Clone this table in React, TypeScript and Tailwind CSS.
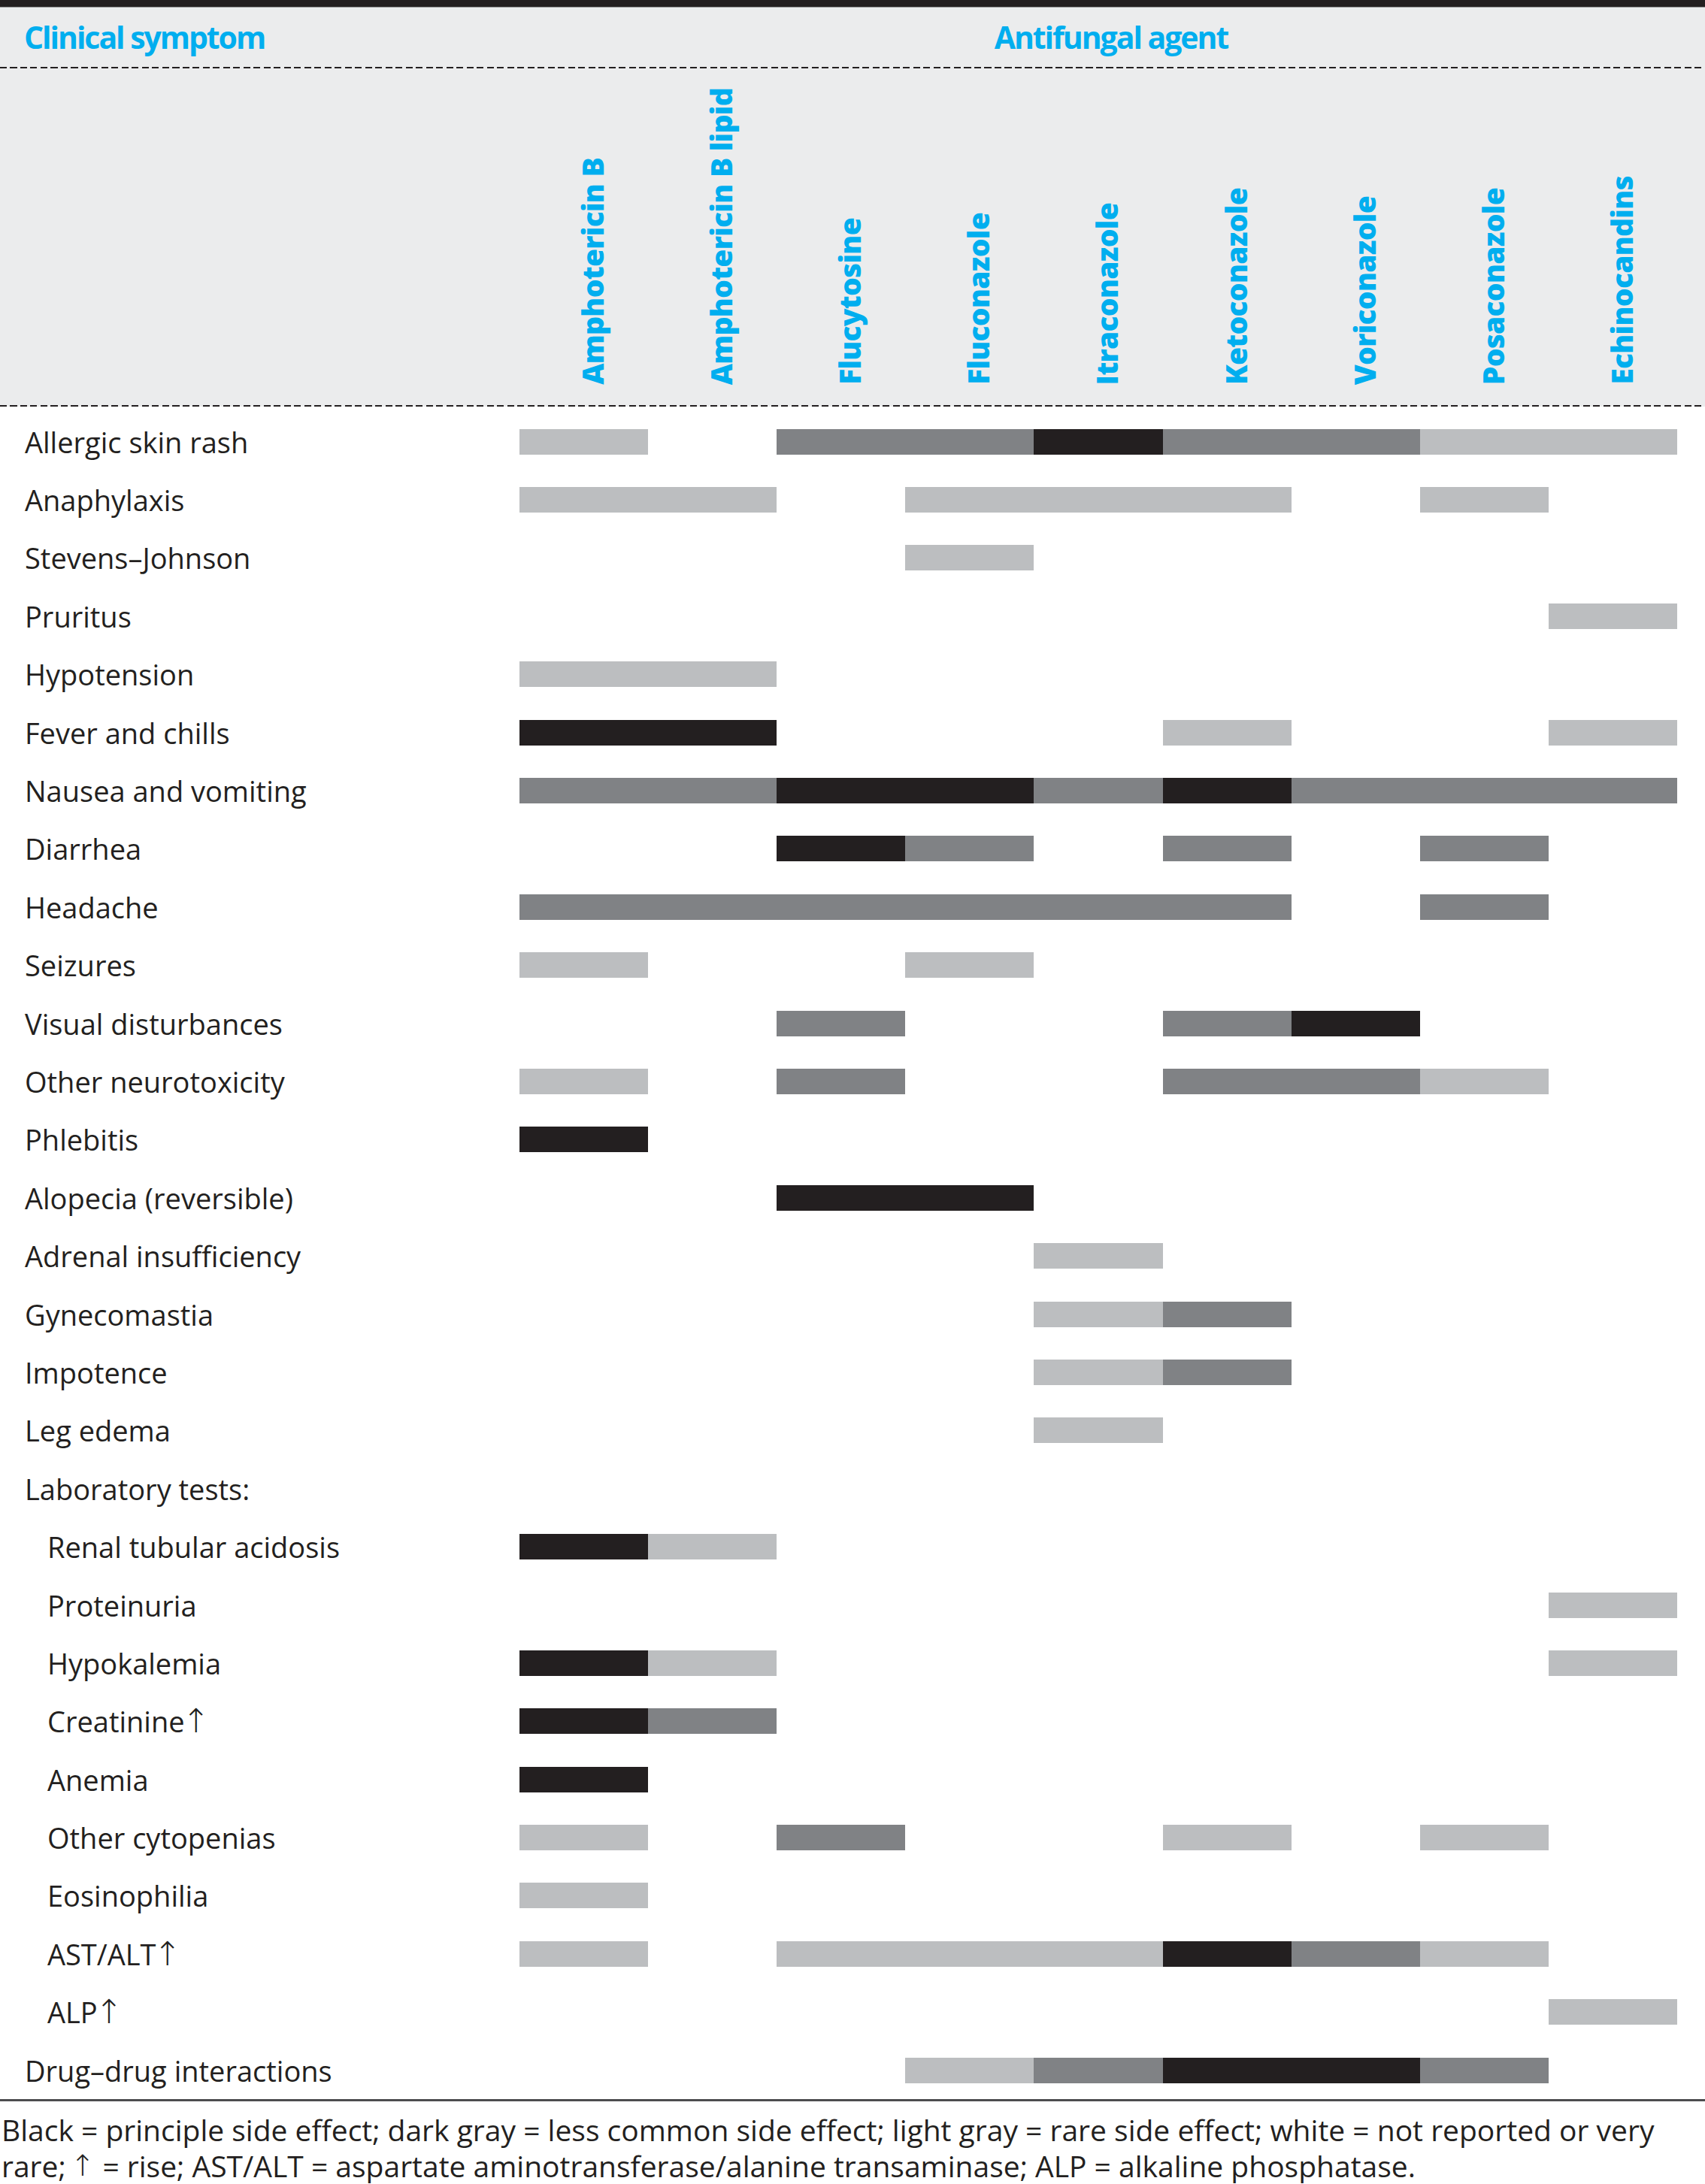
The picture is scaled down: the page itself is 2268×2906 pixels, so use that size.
import type { ReactNode } from 'react';

const AGENTS = [
  'Amphotericin B',
  'Amphotericin B lipid',
  'Flucytosine',
  'Fluconazole',
  'Itraconazole',
  'Ketoconazole',
  'Voriconazole',
  'Posaconazole',
  'Echinocandins',
];

// L = light gray (rare), D = dark gray (less common), B = black (principle), . = none
const FILL: Record<string, string> = {
  L: 'bg-[#bcbec0]',
  D: 'bg-[#808285]',
  B: 'bg-[#231f20]',
  '.': '',
};

type Row = { label: ReactNode; bars: string; indent?: boolean };

function Up() {
  return (
    <span className="-ml-[3px] inline-block font-['DejaVu_Sans',sans-serif] text-[44px] font-light leading-none">↑</span>
  );
}

const ROWS: Row[] = [
  { label: 'Allergic skin rash', bars: 'L.DDBDDLL' },
  { label: 'Anaphylaxis', bars: 'LL.LLL.L.' },
  { label: 'Stevens–Johnson', bars: '...L.....' },
  { label: 'Pruritus', bars: '........L' },
  { label: 'Hypotension', bars: 'LL.......' },
  { label: 'Fever and chills', bars: 'BB...L..L' },
  { label: 'Nausea and vomiting', bars: 'DDBBDBDDD' },
  { label: 'Diarrhea', bars: '..BD.D.D.' },
  { label: 'Headache', bars: 'DDDDDD.D.' },
  { label: 'Seizures', bars: 'L..L.....' },
  { label: 'Visual disturbances', bars: '..D..DB..' },
  { label: 'Other neurotoxicity', bars: 'L.D..DDL.' },
  { label: 'Phlebitis', bars: 'B........' },
  { label: 'Alopecia (reversible)', bars: '..BB.....' },
  { label: 'Adrenal insufficiency', bars: '....L....' },
  { label: 'Gynecomastia', bars: '....LD...' },
  { label: 'Impotence', bars: '....LD...' },
  { label: 'Leg edema', bars: '....L....' },
  { label: 'Laboratory tests:', bars: '.........' },
  { label: 'Renal tubular acidosis', bars: 'BL.......', indent: true },
  { label: 'Proteinuria', bars: '........L', indent: true },
  { label: 'Hypokalemia', bars: 'BL......L', indent: true },
  { label: <>Creatinine<Up /></>, bars: 'BD.......', indent: true },
  { label: 'Anemia', bars: 'B........', indent: true },
  { label: 'Other cytopenias', bars: 'L.D..L.L.', indent: true },
  { label: 'Eosinophilia', bars: 'L........', indent: true },
  { label: <>AST/ALT<Up /></>, bars: 'L.LLLBDL.', indent: true },
  { label: <>ALP<Up /></>, bars: '........L', indent: true },
  { label: 'Drug–drug interactions', bars: '...LDBBD.' },
];

function Dashed() {
  return (
    <div className="h-[2px] bg-[repeating-linear-gradient(to_right,#231f20_0_9px,transparent_9px_13.5px)]" />
  );
}

export default function App() {
  return (
    <div className="w-[2268px] bg-white font-['Open_Sans',sans-serif] text-[#231f20]">
      <div className="h-[9px] bg-[#231f20]" />
      <div className="h-px bg-[#8d8e90]" />

      <div className="bg-[#ebeced]">
        <div className="flex h-[79px] items-center text-[41px] font-bold tracking-[-0.05em] text-[#00aeef]">
          <div className="w-[691px] pl-[32px]">Clinical symptom</div>
          <div className="w-[1588px] text-center">Antifungal agent</div>
        </div>
        <Dashed />
        <div className="flex h-[448px]">
          <div className="w-[691px]" />
          {AGENTS.map((name) => (
            <div key={name} className="flex w-[171.11px] items-end justify-center pb-[27px] pl-[22px]">
              <span className="rotate-180 whitespace-nowrap text-[39px] font-extrabold leading-none tracking-[-0.02em] text-[#00aeef] [writing-mode:vertical-rl]">
                {name}
              </span>
            </div>
          ))}
        </div>
        <Dashed />
      </div>

      <div className="pt-[8px]">
        {ROWS.map((row, i) => (
          <div key={i} className="flex h-[77.4px] items-center">
            <div
              className={`w-[691px] whitespace-nowrap text-[38px] leading-none ${row.indent ? 'pl-[63px]' : 'pl-[33px]'}`}
            >
              {row.label}
            </div>
            <div className="flex h-[34px] w-[1540px]">
              {row.bars.split('').map((c, j) => (
                <div key={j} className={`flex-1 ${FILL[c]}`} />
              ))}
            </div>
          </div>
        ))}
      </div>

      <div className="h-[3px] bg-[#4d4d4f]" />

      <div className="pl-[2px] pt-[13px] text-[39px]">
        <div className="flex h-[48px] items-center whitespace-nowrap leading-none">
          Black = principle side effect; dark gray = less common side effect; light gray = rare side effect; white = not reported or very
        </div>
        <div className="flex h-[48px] items-center whitespace-nowrap leading-none">
          rare;<span className="ml-[6px] mr-[10px] font-['DejaVu_Sans',sans-serif] font-light">↑</span>= rise; AST/ALT = aspartate aminotransferase/alanine transaminase; ALP = alkaline phosphatase.
        </div>
      </div>
    </div>
  );
}
